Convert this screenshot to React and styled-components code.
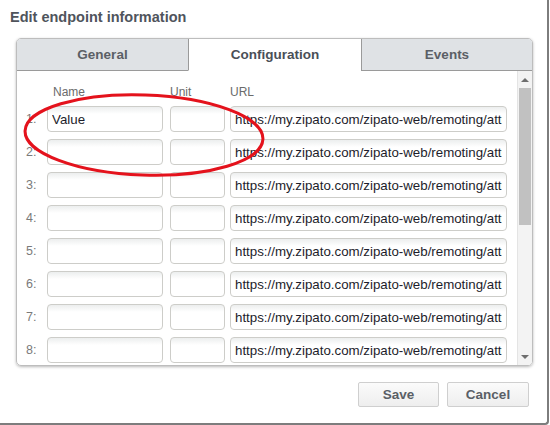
import React from "react";
import styled, { createGlobalStyle } from "styled-components";

const GlobalStyle = createGlobalStyle`
  html, body { margin: 0; padding: 0; background: #ffffff; }
  body { font-family: "Liberation Sans", Arial, sans-serif; }
  * { box-sizing: border-box; }
`;

const Dialog = styled.div`
  position: relative;
  width: 549px;
  height: 425px;
  background: #ffffff;
  border-right: 2px solid #7d7d7d;
  border-bottom: 2px solid #7d7d7d;
  border-bottom-right-radius: 4px;
  display: flex;
  flex-direction: column;
`;

const Title = styled.h1`
  margin: 0;
  padding: 8px 0 0 10px;
  height: 38px;
  font-size: 14.5px;
  font-weight: bold;
  color: #4f545c;
  line-height: 18px;
`;

const Panel = styled.div`
  margin-left: 16px;
  width: 517px;
  height: 328px;
  border: 1px solid #bdbdbd;
  border-radius: 5px;
  box-shadow: 0 1px 3px rgba(0, 0, 0, 0.28);
  overflow: hidden;
  display: flex;
  flex-direction: column;
`;

const TabBar = styled.div`
  display: grid;
  grid-template-columns: 171px 173px 1fr;
  height: 32px;
`;

const Tab = styled.div`
  display: flex;
  align-items: center;
  justify-content: center;
  font-size: 13.5px;
  font-weight: bold;
  color: ${(p) => (p.$active ? "#4a4f57" : "#5b5f66")};
  background: ${(p) => (p.$active ? "#ffffff" : "#dfe2e5")};
  border-bottom: ${(p) => (p.$active ? "1px solid transparent" : "1px solid #9a9a9a")};
  border-left: ${(p) => (p.$divider ? "1px solid #9a9a9a" : "none")};
`;

const Body = styled.div`
  flex: 1;
  display: flex;
  min-height: 0;
`;

const List = styled.div`
  flex: 1;
  padding: 14px 0 0 9px;
  display: flex;
  flex-direction: column;
  gap: 7px;
`;

const Row = styled.div`
  display: grid;
  grid-template-columns: 21px 123px 60px 277px;
  align-items: center;
  height: ${(p) => (p.$header ? "14px" : "26px")};
`;

const HeadLabel = styled.span`
  font-size: 12px;
  line-height: 14px;
  color: #6b6b6b;
  padding-left: ${(p) => p.$indent || 0}px;
`;

const Index = styled.span`
  font-size: 12.5px;
  color: #7a7a7a;
`;

const Field = styled.input`
  width: ${(p) => p.$w}px;
  height: 26px;
  padding: 0 4px;
  border: 1px solid #cdcdc9;
  border-radius: 4px;
  background: linear-gradient(#eceeee 0, #ffffff 7px, #ffffff 100%);
  font-family: "Liberation Sans", Arial, sans-serif;
  font-size: 13.3px;
  color: #1d1d2b;
  outline: none;
`;

const ScrollTrack = styled.div`
  width: 15px;
  background: #f3f3f3;
  border-left: 1px solid #e4e4e4;
  display: flex;
  flex-direction: column;
  align-items: center;
`;

const Arrow = styled.div`
  height: 17px;
  width: 100%;
  display: flex;
  align-items: center;
  justify-content: center;
  &::before {
    content: "";
    border-left: 4px solid transparent;
    border-right: 4px solid transparent;
    ${(p) =>
      p.$down ? "border-top: 4px solid #6e6e6e;" : "border-bottom: 4px solid #6e6e6e;"}
  }
`;

const Thumb = styled.div`
  width: 12px;
  height: 137px;
  background: #c1c1c1;
`;

const TrackRest = styled.div`
  flex: 1;
`;

const Footer = styled.div`
  display: flex;
  justify-content: flex-end;
  gap: 8px;
  padding: 16px 18px 0 0;
`;

const Button = styled.button`
  width: ${(p) => p.$w}px;
  height: 25px;
  border: 1px solid #cfcfcf;
  border-radius: 2px;
  background: linear-gradient(#fbfbfb, #eeeeee);
  font-family: "Liberation Sans", Arial, sans-serif;
  font-size: 13.5px;
  font-weight: bold;
  color: #5a5f66;
  padding: 0;
`;

const Mark = styled.svg`
  position: absolute;
  left: 0;
  top: 0;
  pointer-events: none;
`;

const URL_VALUE =
  "https://my.zipato.com/zipato-web/remoting/attribute/set?serial=&ep=&value=";

const rows = [1, 2, 3, 4, 5, 6, 7, 8];

export default function App() {
  return (
    <>
      <GlobalStyle />
      <Dialog>
        <Title>Edit endpoint information</Title>
        <Panel>
          <TabBar>
            <Tab>General</Tab>
            <Tab $active $divider>Configuration</Tab>
            <Tab $divider>Events</Tab>
          </TabBar>
          <Body>
            <List>
              <Row $header>
                <span />
                <HeadLabel $indent={6}>Name</HeadLabel>
                <HeadLabel>Unit</HeadLabel>
                <HeadLabel>URL</HeadLabel>
              </Row>
              {rows.map((n) => (
                <Row key={n}>
                  <Index>{n}:</Index>
                  <Field $w={116} defaultValue={n === 1 ? "Value" : ""} />
                  <Field $w={55} defaultValue="" />
                  <Field $w={277} defaultValue={URL_VALUE} />
                </Row>
              ))}
            </List>
            <ScrollTrack>
              <Arrow />
              <Thumb />
              <TrackRest />
              <Arrow $down />
            </ScrollTrack>
          </Body>
        </Panel>
        <Footer>
          <Button $w={81}>Save</Button>
          <Button $w={82}>Cancel</Button>
        </Footer>
        <Mark width="549" height="425">
          <ellipse
            cx="144"
            cy="135"
            rx="119"
            ry="40"
            fill="none"
            stroke="#e4121c"
            strokeWidth="3"
            transform="rotate(2 144 135)"
          />
        </Mark>
      </Dialog>
    </>
  );
}
